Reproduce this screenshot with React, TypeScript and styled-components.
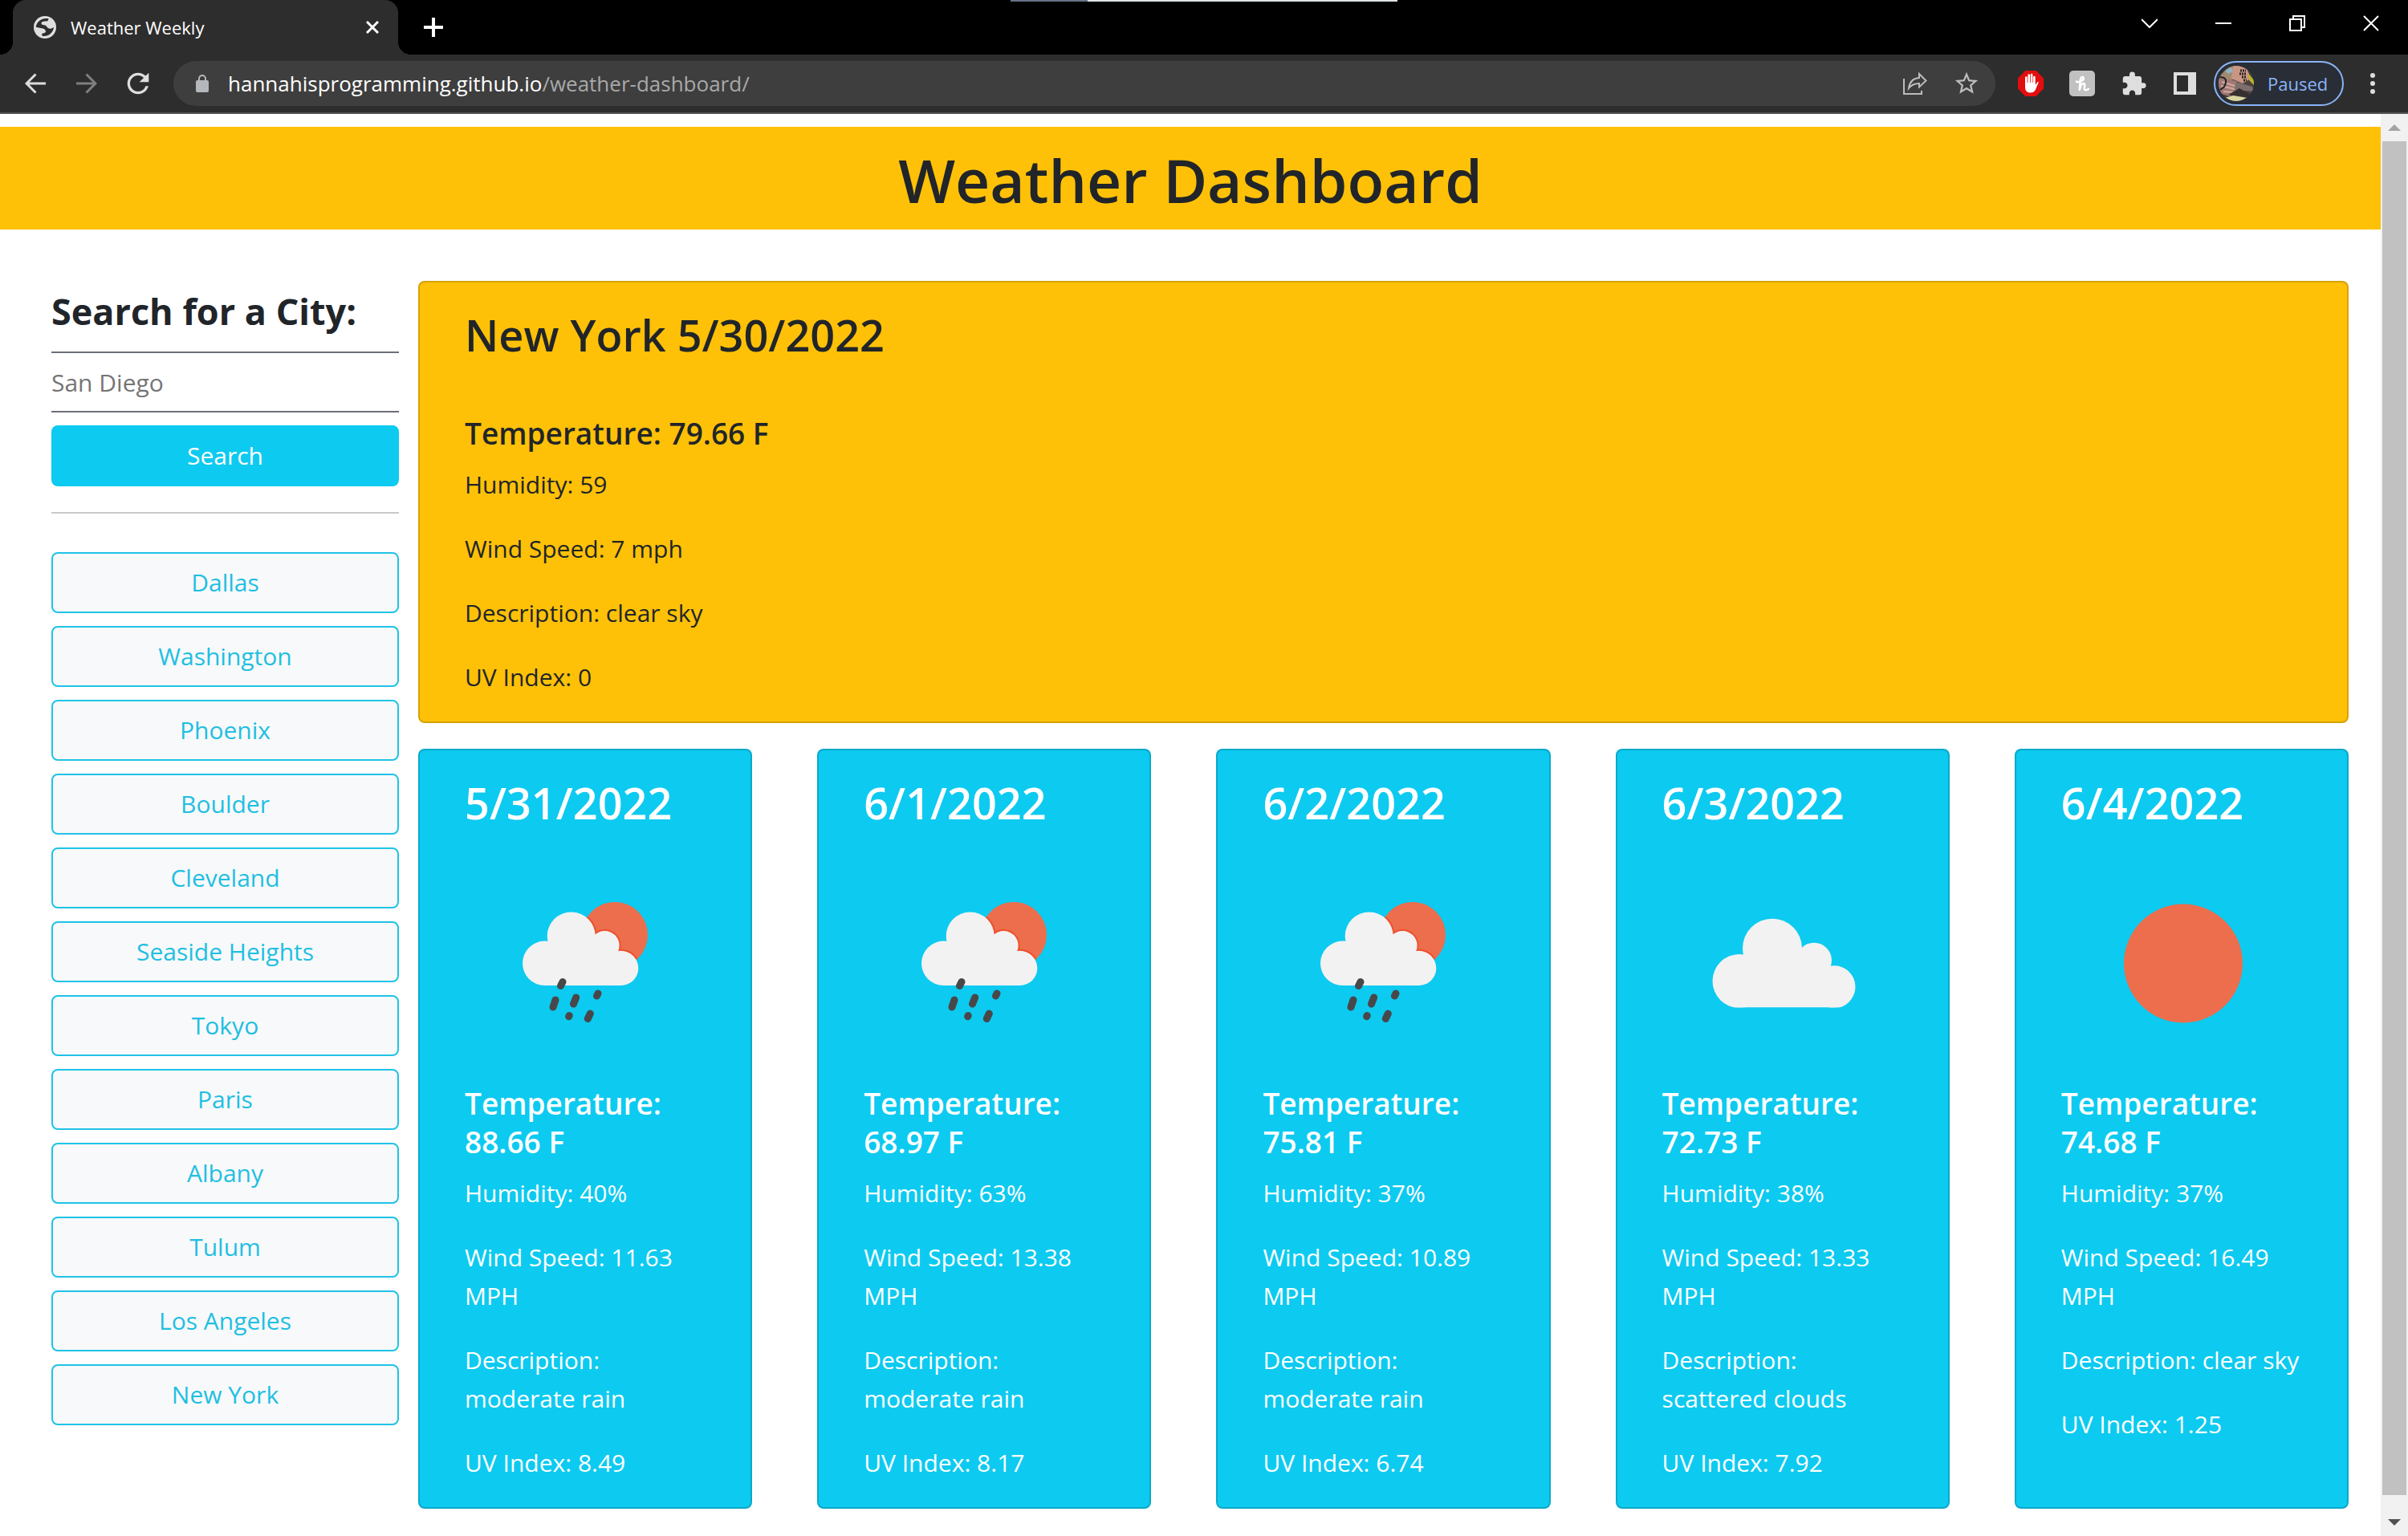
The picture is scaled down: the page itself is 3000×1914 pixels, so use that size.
import React from "react";
import styled, { createGlobalStyle } from "styled-components";
import { MdExtension, MdRefresh, MdStarBorder } from "react-icons/md";

const colors = {
  chrome: "#2d2d2d",
  field: "#3e3e3e",
  warning: "#ffc107",
  info: "#0dcaf0",
  light: "#f8f9fa",
  ink: "#212529",
  icon: "#dedede",
};

const GlobalStyle = createGlobalStyle`
  *, *::before, *::after { box-sizing: border-box; }
  html, body { margin: 0; background: #fff; }
  body, button, input {
    font-family: "Open Sans", "Noto Sans", sans-serif;
    font-size: 30px;
    line-height: 48px;
    color: ${colors.ink};
  }
  button { cursor: pointer; }
`;

const Window = styled.div`
  display: flex;
  flex-direction: column;
  min-height: 100vh;
`;

/* ---------- Browser frame ---------- */

const TitleBar = styled.header`
  position: relative;
  display: flex;
  align-items: stretch;
  height: 68px;
  padding-left: 16px;
  background: #000;
`;

const ShareStrip = styled.div`
  position: absolute;
  top: 0;
  left: 50%;
  width: 482px;
  height: 2px;
  transform: translateX(-50%);
  background: linear-gradient(to right, #667286 20%, #dfe3e6 20%);
`;

const Tab = styled.div`
  position: relative;
  display: flex;
  align-items: center;
  gap: 18px;
  width: 480px;
  padding: 0 16px 0 26px;
  border-radius: 16px 16px 0 0;
  background: ${colors.chrome};
  color: #fff;
  font-size: 22px;
  line-height: 32px;

  &::before,
  &::after {
    content: "";
    position: absolute;
    bottom: 0;
    width: 16px;
    height: 16px;
  }
  &::before {
    right: 100%;
    background: radial-gradient(circle at 0 0, transparent 16px, ${colors.chrome} 16px);
  }
  &::after {
    left: 100%;
    background: radial-gradient(circle at 100% 0, transparent 16px, ${colors.chrome} 16px);
  }
`;

const TabTitle = styled.span`
  flex: 1;
`;

const IconButton = styled.button<{ $w?: number; $h?: number }>`
  display: flex;
  flex: none;
  align-items: center;
  justify-content: center;
  width: ${(p) => p.$w ?? 64}px;
  height: ${(p) => p.$h ?? 56}px;
  padding: 0;
  border: 0;
  background: none;
  color: ${colors.icon};
`;

const NewTab = styled(IconButton)`
  margin-left: 16px;
`;

const WindowControls = styled.div`
  display: flex;
  margin-left: auto;
`;

const Toolbar = styled.nav`
  display: flex;
  align-items: center;
  height: 74px;
  padding: 0 8px 0 12px;
  border-bottom: 2px solid #555355;
  background: ${colors.chrome};
`;

const AddressBar = styled.div`
  display: flex;
  flex: 1;
  align-items: center;
  height: 56px;
  margin: 0 12px;
  padding: 0 4px;
  border-radius: 28px;
  background: ${colors.field};
`;

const Url = styled.div`
  flex: 1;
  color: #a9a9a9;
  font-size: 26px;
  line-height: 36px;
`;

const Host = styled.span`
  color: #fff;
`;

const Profile = styled.button`
  display: flex;
  align-items: center;
  gap: 17px;
  width: 162px;
  height: 56px;
  margin-left: 4px;
  padding: 0 4px;
  border: 2px solid #8ab4f8;
  border-radius: 28px;
  background: #292d36;
  color: #8ab4f8;
  font-size: 22px;
  line-height: 32px;
`;

/* ---------- Scrollbar ---------- */

const Viewport = styled.div`
  display: flex;
  flex: 1;
`;

const ScrollTrack = styled.div`
  display: flex;
  flex: none;
  flex-direction: column;
  width: 34px;
  padding: 0 2px;
  background: #f1f1f1;
`;

const ScrollThumb = styled.div`
  flex: 1;
  margin-bottom: 17px;
  background: #c1c1c1;
`;

/* ---------- Page ---------- */

const Page = styled.div`
  flex: 1;
  min-width: 0;
  padding: 16px 0 32px;
`;

const Banner = styled.header`
  padding: 18px 16px 14px;
  background: ${colors.warning};
  text-align: center;
`;

const BannerTitle = styled.h1`
  margin: 0;
  font-size: 75px;
  font-weight: 600;
  line-height: 96px;
`;

const Layout = styled.div`
  display: grid;
  grid-template-columns: 433fr 2405fr;
  gap: 24px;
  align-items: start;
  padding: 64px 40px 0 64px;
`;

const SearchForm = styled.form`
  display: flex;
  flex-direction: column;
`;

const SearchLabel = styled.label`
  padding: 8px 0 20px;
  font-size: 45px;
  font-weight: 700;
  line-height: 60px;
`;

const SearchInput = styled.input`
  width: 100%;
  height: 76px;
  margin-bottom: 16px;
  padding: 0;
  border: solid #6b6f78;
  border-width: 2px 0;
  background: none;
  outline: none;

  &::placeholder {
    color: #757575;
    opacity: 1;
  }
`;

const Button = styled.button<{ $outline?: boolean }>`
  display: block;
  width: 100%;
  padding: 12px 24px;
  border: 2px solid ${(p) => (p.$outline ? "#1fc3e6" : colors.info)};
  border-radius: 8px;
  background: ${(p) => (p.$outline ? colors.light : colors.info)};
  color: ${(p) => (p.$outline ? "#1fbfe2" : "#fff")};
`;

const Divider = styled.hr`
  height: 2px;
  margin: 32px 0 48px;
  border: 0;
  background: #c8c9ca;
`;

const CityList = styled.ul`
  display: flex;
  flex-direction: column;
  gap: 16px;
  margin: 0;
  padding: 0;
  list-style: none;
`;

const Results = styled.main`
  display: grid;
  gap: 32px;
`;

const Card = styled.article<{ $tone: "warning" | "info" }>`
  padding: 32px 56px 31px;
  border: 2px solid rgba(0, 0, 0, 0.16);
  border-radius: 8px;
  background: ${(p) => colors[p.$tone]};
  color: ${(p) => (p.$tone === "info" ? "#fff" : colors.ink)};
`;

const CardTitle = styled.h2`
  margin: 0 0 65px;
  font-size: 54px;
  font-weight: 600;
  line-height: 67px;
`;

const Temperature = styled.h3`
  margin: 0 0 16px;
  font-size: 37px;
  font-weight: 600;
  line-height: 48px;
`;

const Detail = styled.p`
  margin: 0 0 32px;

  &:last-child {
    margin-bottom: 0;
  }
`;

const Forecast = styled.section`
  display: grid;
  grid-template-columns: repeat(5, 1fr);
  gap: 81px;
`;

const Picture = styled.svg`
  display: block;
  width: 200px;
  height: 200px;
  margin: 0 auto 52px;
`;

/* ---------- Drawings ---------- */

const Globe = () => (
  <svg width="28" height="28" viewBox="126 60 84 84" aria-hidden="true">
    <circle cx="168" cy="102" r="42" fill="#dedede" />
    <path
      d="M182 70C158 65 138 79 134 101L152 105C164 106 171 110 171 119C167 125 158 123 156 128L159 135C183 137 199 121 201 102L191 107C180 108 176 101 171 95L158 92C152 87 154 82 162 80L178 79Z"
      fill="#2d2d2d"
    />
  </svg>
);

const Cross = ({ size, stroke }: { size: number; stroke: number }) => (
  <svg width={size} height={size} viewBox={`0 0 ${size} ${size}`} aria-hidden="true">
    <path d={`M1 1L${size - 1} ${size - 1}M${size - 1} 1L1 ${size - 1}`} stroke="#fff" strokeWidth={stroke} />
  </svg>
);

const Arrow = ({ forward }: { forward?: boolean }) => (
  <svg width="26" height="26" viewBox="0 0 26 26" fill="none" stroke={forward ? "#7f7f7f" : "#dedede"} strokeWidth="3" aria-hidden="true">
    <path d={forward ? "M0 13H24M12.500 1.500L24 13L12.500 24.500" : "M26 13H2M13.500 1.500L2 13L13.500 24.500"} />
  </svg>
);

const Lock = () => (
  <svg width="16" height="22" viewBox="0 0 16 22" aria-hidden="true">
    <path d="M4 9V5a4 4 0 0 1 8 0V9" fill="none" stroke="#b4b7bc" strokeWidth="2" />
    <rect y="7" width="16" height="15" rx="2" fill="#b4b7bc" />
  </svg>
);

const Share = () => (
  <svg width="30" height="28" viewBox="0 0 30 28" fill="none" stroke="#bcbcbc" strokeWidth="2" aria-hidden="true">
    <path d="M1 8V27H23V23" />
    <path d="M7 20C8 12 13 7.500 20 7V2L28.500 10.500L20 18.500V14C14 14 10 16 7 20Z" />
  </svg>
);

const StopHand = () => (
  <svg width="32" height="32" viewBox="0 0 32 32" aria-hidden="true">
    <path d="M9.400 0H22.600L32 9.400V22.600L22.600 32H9.400L0 22.600V9.400Z" fill="#e40d0d" />
    <path d="M9 15H21L22.500 17.500L24 14.500C24.600 13.400 26 14 25.500 15.200L22 23.500C20.500 26.600 18.500 27.500 15.500 27.500C11.500 27.500 9 25 9 21Z" fill="#fff" />
    <path d="M10.300 17V8.500M13.700 16V5.500M17.100 16V5M20.400 17V8" stroke="#fff" strokeWidth="2.600" strokeLinecap="round" />
  </svg>
);

const Honey = () => (
  <svg width="32" height="32" viewBox="0 0 32 32" aria-hidden="true">
    <rect width="32" height="32" rx="5" fill="#c1c1c1" />
    <path
      d="M9 13.500C10 15 18.500 13 17.800 9.500C17 6.500 14.300 8 13.800 11.500L12.800 24C13.800 19.500 15.800 15.500 18.200 16C20.500 16.500 18.500 20 18.800 22.500C19 24.800 21.500 24.800 24 22.800"
      fill="none"
      stroke="#fff"
      strokeWidth="2.600"
      strokeLinecap="round"
      strokeLinejoin="round"
    />
  </svg>
);

const SidePanel = () => (
  <svg width="28" height="28" viewBox="0 0 28 28" aria-hidden="true">
    <path d="M0 0H28V28H0ZM4 4V24H18V4Z" fill="#dedede" fillRule="evenodd" />
  </svg>
);

const Avatar = () => (
  <svg width="44" height="44" viewBox="0 0 44 44" aria-hidden="true">
    <clipPath id="avatar">
      <circle cx="22" cy="22" r="22" />
    </clipPath>
    <g clipPath="url(#avatar)">
      <rect width="44" height="44" fill="#4c4240" />
      <path d="M0 14L14 0H26L22 16L0 22Z" fill="#a08a70" />
      <path d="M8 6L16 2L18 7L12 10Z" fill="#8fb4c4" />
      <path d="M18 0H34L40 16L30 22L16 16Z" fill="#c99585" />
      <path d="M36 8L44 18V24L38 18Z" fill="#b9b22c" />
      <path d="M0 14L22 19L28 26L14 38L0 34Z" fill="#a07874" />
      <path d="M4 20L20 25M3 25L20 29M6 32L18 33" stroke="#d0a89e" strokeWidth="2" />
      <path d="M1 14C8 14 11 17 8 24C7 28 4 28 2 30" fill="none" stroke="#222" strokeWidth="2" />
      <path d="M22 20L42 26L44 32L20 30Z" fill="#7d6f6d" />
      <path d="M12 36L26 28L40 36L34 40Z" fill="#352f30" />
      <path d="M8 40L18 37L36 40L28 44H14Z" fill="#d8d6a0" />
      <path d="M27 6H34M26 10H34M29 14H35M31 18H35" stroke="#2b2523" strokeWidth="3" strokeDasharray="2 1" />
    </g>
  </svg>
);

const Dots = () => (
  <svg width="6" height="26" viewBox="0 0 6 26" fill="#dedede" aria-hidden="true">
    <circle cx="3" cy="3" r="3" />
    <circle cx="3" cy="13" r="3" />
    <circle cx="3" cy="23" r="3" />
  </svg>
);

const ScrollArrow = ({ down }: { down?: boolean }) => (
  <svg width="16" height="8" viewBox="0 0 16 8" aria-hidden="true">
    <path d={down ? "M0 0H16L8 8Z" : "M0 8H16L8 0Z"} fill={down ? "#505050" : "#a3a3a3"} />
  </svg>
);

type Sky = "rain" | "clouds" | "clear";

const RainCloud = ({ grow = 0 }: { grow?: number }) => (
  <>
    <circle cx="49.700" cy="99.300" r={27.7 + grow} />
    <circle cx="82.700" cy="65.500" r={30 + grow} />
    <circle cx="124.300" cy="77.300" r={18.3 + grow} />
    <circle cx="144.700" cy="105.400" r={21.6 + grow} />
    <path d="M49.700 127V90L60 66L105 62L128 76L134 92L144.700 127Z" />
  </>
);

const SkyPicture = ({ sky }: { sky: Sky }) => (
  <Picture viewBox="0 -2 200 200" role="img" aria-label={sky}>
    {sky === "rain" && (
      <>
        <clipPath id="rain-sun">
          <circle cx="137" cy="64" r="41" />
        </clipPath>
        <circle cx="137" cy="64" r="41" fill="#ec6e4c" />
        <g clipPath="url(#rain-sun)" fill="#ee4f2c">
          <RainCloud grow={2} />
        </g>
        <g fill="#f2f2f2">
          <RainCloud />
        </g>
        <path
          d="M72 122.500L69.500 127.500M63 145L60 154M88.700 142L85.500 150M116 137L114.500 140M80.200 164.500L79.600 165.700M106.300 162L103.300 168.500"
          stroke="#48484a"
          strokeWidth="9"
          strokeLinecap="round"
        />
      </>
    )}
    {sky === "clouds" && (
      <>
        <clipPath id="cloud-base">
          <rect width="200" height="154.500" />
        </clipPath>
        <g clipPath="url(#cloud-base)" fill="#f2f2f2">
          <circle cx="46" cy="121.500" r="33.500" />
          <circle cx="87" cy="80.700" r="37" />
          <circle cx="139" cy="95.700" r="22" />
          <circle cx="164" cy="128.700" r="26.500" />
          <path d="M40 154.500V100H52L60 80H120L140 90L165 110V154.500Z" />
        </g>
      </>
    )}
    {sky === "clear" && <circle cx="102" cy="99.500" r="74" fill="#ec6e4c" />}
  </Picture>
);

/* ---------- Data ---------- */

const cities = [
  "Dallas",
  "Washington",
  "Phoenix",
  "Boulder",
  "Cleveland",
  "Seaside Heights",
  "Tokyo",
  "Paris",
  "Albany",
  "Tulum",
  "Los Angeles",
  "New York",
];

const days: { date: string; sky: Sky; temp: string; humidity: number; wind: string; text: string; uv: string }[] = [
  { date: "5/31/2022", sky: "rain", temp: "88.66", humidity: 40, wind: "11.63", text: "moderate rain", uv: "8.49" },
  { date: "6/1/2022", sky: "rain", temp: "68.97", humidity: 63, wind: "13.38", text: "moderate rain", uv: "8.17" },
  { date: "6/2/2022", sky: "rain", temp: "75.81", humidity: 37, wind: "10.89", text: "moderate rain", uv: "6.74" },
  { date: "6/3/2022", sky: "clouds", temp: "72.73", humidity: 38, wind: "13.33", text: "scattered clouds", uv: "7.92" },
  { date: "6/4/2022", sky: "clear", temp: "74.68", humidity: 37, wind: "16.49", text: "clear sky", uv: "1.25" },
];

const BrowserFrame = () => (
  <>
    <TitleBar>
      <ShareStrip />
      <Tab>
        <Globe />
        <TabTitle>Weather Weekly</TabTitle>
        <IconButton $w={32} $h={32} aria-label="Close tab">
          <Cross size={16} stroke={3} />
        </IconButton>
      </Tab>
      <NewTab $w={56} $h={68} aria-label="New tab">
        <svg width="24" height="24" viewBox="0 0 24 24" aria-hidden="true">
          <path d="M12 0V24M0 12H24" stroke="#fff" strokeWidth="4" />
        </svg>
      </NewTab>
      <WindowControls>
        <IconButton $w={92} $h={58} aria-label="Search tabs">
          <svg width="20" height="12" viewBox="0 0 20 12" aria-hidden="true">
            <path d="M0 1L10 11L20 1" fill="none" stroke="#fff" strokeWidth="2" />
          </svg>
        </IconButton>
        <IconButton $w={92} $h={58} aria-label="Minimize">
          <svg width="20" height="2" viewBox="0 0 20 2" aria-hidden="true">
            <path d="M0 1H20" stroke="#fff" strokeWidth="2" />
          </svg>
        </IconButton>
        <IconButton $w={92} $h={58} aria-label="Restore">
          <svg width="20" height="20" viewBox="0 0 20 20" fill="none" stroke="#fff" strokeWidth="2" aria-hidden="true">
            <path d="M1 5H15V19H1ZM5 5V1H19V15H15" />
          </svg>
        </IconButton>
        <IconButton $w={92} $h={58} aria-label="Close window">
          <Cross size={20} stroke={2} />
        </IconButton>
      </WindowControls>
    </TitleBar>
    <Toolbar aria-label="Browser">
      <IconButton aria-label="Back">
        <Arrow />
      </IconButton>
      <IconButton aria-label="Forward">
        <Arrow forward />
      </IconButton>
      <IconButton aria-label="Reload">
        <MdRefresh size={40} />
      </IconButton>
      <AddressBar>
        <IconButton aria-label="Site information">
          <Lock />
        </IconButton>
        <Url>
          <Host>hannahisprogramming.github.io</Host>/weather-dashboard/
        </Url>
        <IconButton aria-label="Share">
          <Share />
        </IconButton>
        <IconButton aria-label="Bookmark">
          <MdStarBorder size={34} color="#bcbcbc" />
        </IconButton>
      </AddressBar>
      <IconButton aria-label="Ad blocker">
        <StopHand />
      </IconButton>
      <IconButton aria-label="Coupons">
        <Honey />
      </IconButton>
      <IconButton aria-label="Extensions">
        <MdExtension size={33} />
      </IconButton>
      <IconButton aria-label="Side panel">
        <SidePanel />
      </IconButton>
      <Profile>
        <Avatar />
        Paused
      </Profile>
      <IconButton $w={72} aria-label="Menu">
        <Dots />
      </IconButton>
    </Toolbar>
  </>
);

export default function App() {
  return (
    <Window>
      <GlobalStyle />
      <BrowserFrame />
      <Viewport>
        <Page>
          <Banner>
            <BannerTitle>Weather Dashboard</BannerTitle>
          </Banner>
          <Layout>
            <aside>
              <SearchForm onSubmit={(e) => e.preventDefault()}>
                <SearchLabel htmlFor="city">Search for a City:</SearchLabel>
                <SearchInput id="city" type="text" placeholder="San Diego" />
                <Button type="submit">Search</Button>
              </SearchForm>
              <Divider />
              <CityList>
                {cities.map((city) => (
                  <li key={city}>
                    <Button type="button" $outline>
                      {city}
                    </Button>
                  </li>
                ))}
              </CityList>
            </aside>
            <Results>
              <Card $tone="warning">
                <CardTitle>New York 5/30/2022</CardTitle>
                <Temperature>Temperature: 79.66 F</Temperature>
                <Detail>Humidity: 59</Detail>
                <Detail>Wind Speed: 7 mph</Detail>
                <Detail>Description: clear sky</Detail>
                <Detail>UV Index: 0</Detail>
              </Card>
              <Forecast>
                {days.map((day) => (
                  <Card key={day.date} $tone="info">
                    <CardTitle>{day.date}</CardTitle>
                    <SkyPicture sky={day.sky} />
                    <Temperature>Temperature: {day.temp} F</Temperature>
                    <Detail>Humidity: {day.humidity}%</Detail>
                    <Detail>Wind Speed: {day.wind} MPH</Detail>
                    <Detail>Description: {day.text}</Detail>
                    <Detail>UV Index: {day.uv}</Detail>
                  </Card>
                ))}
              </Forecast>
            </Results>
          </Layout>
        </Page>
        <ScrollTrack>
          <IconButton $w={30} $h={34} aria-label="Scroll up">
            <ScrollArrow />
          </IconButton>
          <ScrollThumb />
          <IconButton $w={30} $h={34} aria-label="Scroll down">
            <ScrollArrow down />
          </IconButton>
        </ScrollTrack>
      </Viewport>
    </Window>
  );
}
